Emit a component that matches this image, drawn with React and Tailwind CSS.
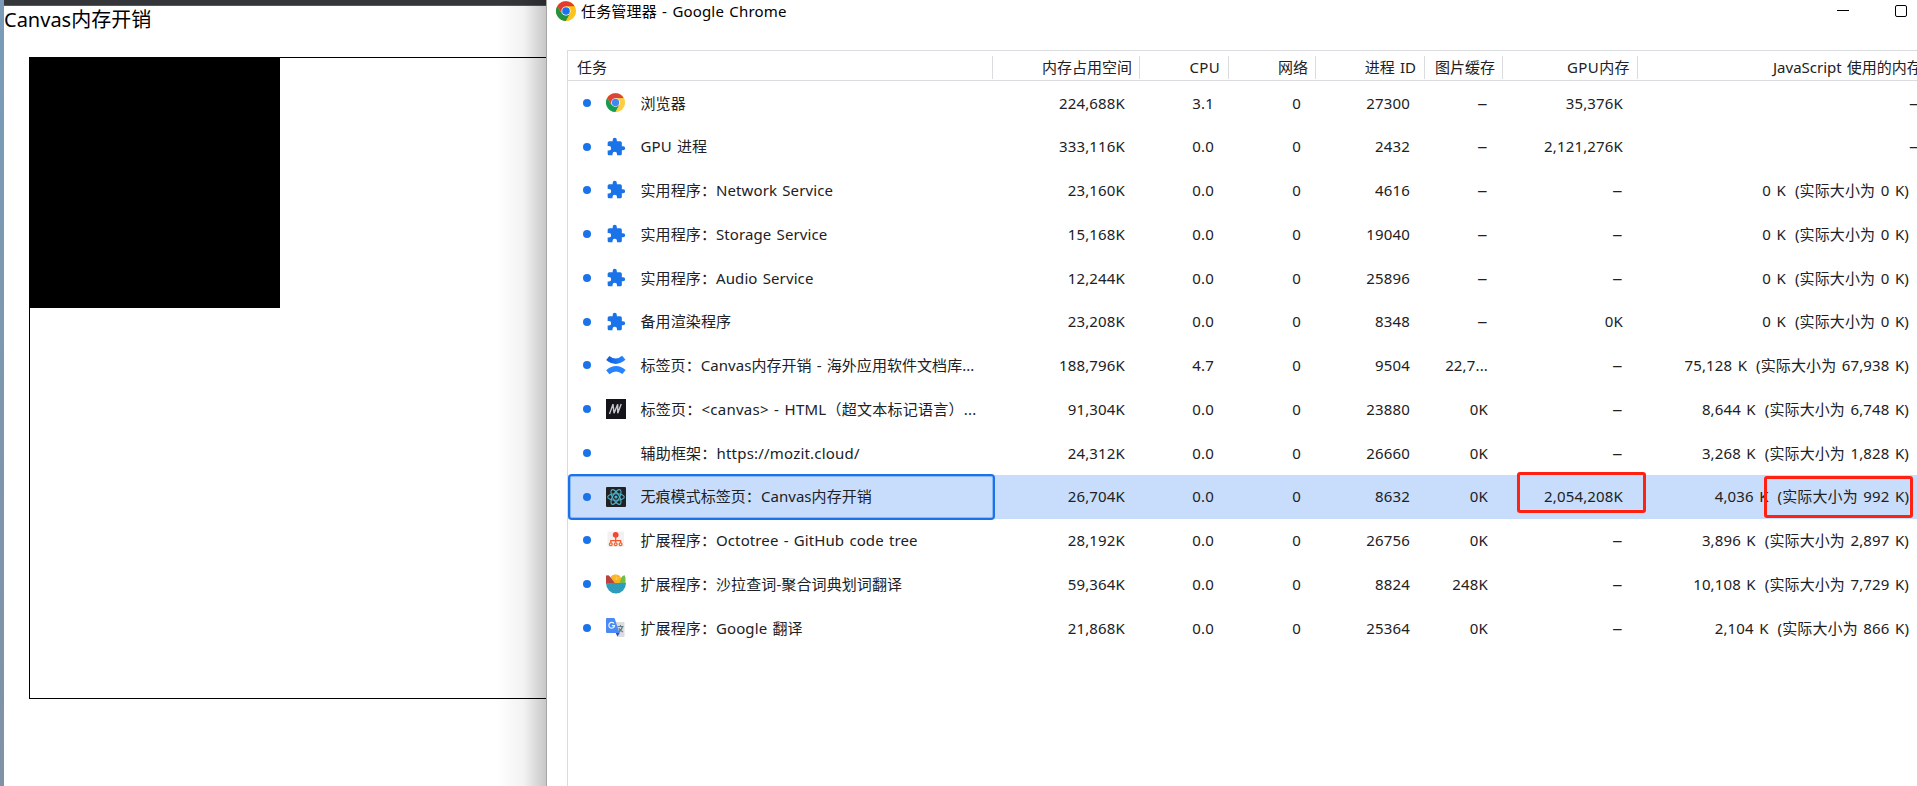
const PUZZLE =
  "M20.5 11H19V7c0-1.1-.9-2-2-2h-4V3.5a2.5 2.5 0 0 0-5 0V5H4c-1.1 0-2 .9-2 2v3.800h1.500a2.700 2.700 0 0 1 0 5.400H2V20c0 1.100.9 2 2 2h3.800v-1.500a2.700 2.700 0 0 1 5.400 0V22H17c1.100 0 2-.9 2-2v-4h1.500a2.500 2.500 0 0 0 0-5z";

function ChromeLogo({ soft }) {
  const red = soft ? "#db4437" : "#e33b2e";
  const green = soft ? "#0f9d58" : "#229342";
  const yellow = soft ? "#ffcd40" : "#fcc419";
  return (
    <svg viewBox="0 0 48 48" className="block h-full w-full">
      <circle cx="24" cy="24" r="24" fill={yellow} />
      <path d="M24 24 34.400 30 24 48A24 24 0 0 1 3.200 12L13.600 30Z" fill={green} />
      <path d="M24 13H44.800A24 24 0 0 0 3.200 12L14 30 24 24Z" fill={red} />
      <path d="M24 13H44.800A24 24 0 0 1 24 48L34 29Z" fill={yellow} />
      <circle cx="24" cy="24" r="11" fill="#fff" />
      <circle cx="24" cy="24" r="9.200" fill={soft ? "#4285f4" : "#1a73e8"} />
    </svg>
  );
}

function PuzzleIcon() {
  return (
    <svg viewBox="0 0 24 24" className="block h-[20px] w-[20px]">
      <path d={PUZZLE} fill="#1a73e8" />
    </svg>
  );
}

function ConfluenceIcon() {
  return (
    <svg viewBox="0 0 20 20" className="block h-[20px] w-[20px]">
      <defs>
        <linearGradient id="cfa" x1="0" x2="1">
          <stop offset="0" stopColor="#0f5fdc" />
          <stop offset="1" stopColor="#2684ff" />
        </linearGradient>
      </defs>
      <path d="M1.800 3Q10 9.500 17.800 2.800" fill="none" stroke="url(#cfa)" strokeWidth="5.200" />
      <path d="M1.800 17.200Q10 10.500 18 17" fill="none" stroke="#2684ff" strokeWidth="5.200" />
    </svg>
  );
}

function MdnIcon() {
  return (
    <svg viewBox="0 0 20 20" className="block h-[20px] w-[20px]">
      <rect width="20" height="20" fill="#15141a" />
      <path d="M3.500 15 7 5.200 8 14.200 11.700 5.200V14.200M11.700 14.200 15.200 5" fill="none" stroke="#c4c4c6" strokeWidth="1.400" />
    </svg>
  );
}

function ReactIcon() {
  return (
    <svg viewBox="0 0 20 20" className="block h-[20px] w-[20px]">
      <rect width="20" height="20" rx="1" fill="#222" />
      <g fill="none" stroke="#4fb3cd" strokeWidth="1.100">
        <ellipse cx="10" cy="10" rx="8.300" ry="3.300" />
        <ellipse cx="10" cy="10" rx="8.300" ry="3.300" transform="rotate(60 10 10)" />
        <ellipse cx="10" cy="10" rx="8.300" ry="3.300" transform="rotate(120 10 10)" />
      </g>
      <circle cx="10" cy="10" r="1.600" fill="#4fb3cd" />
    </svg>
  );
}

function OctotreeIcon() {
  return (
    <svg viewBox="0 0 20 20" className="block h-[20px] w-[20px]">
      <rect x="1.500" y="1.500" width="16.500" height="15.500" rx="1" fill="#f1f1f1" />
      <circle cx="9.700" cy="4.800" r="2.900" fill="#f4452d" />
      <path d="M9.700 6.500V12.500M4.800 13V10.600H14.600V13" fill="none" stroke="#f4572d" strokeWidth="1.300" />
      <g fill="#fff" stroke="#f4632d" strokeWidth="1.300">
        <circle cx="4.800" cy="14.200" r="1.400" />
        <circle cx="9.700" cy="14.200" r="1.400" />
        <circle cx="14.600" cy="14.200" r="1.400" />
      </g>
    </svg>
  );
}

function SaladIcon() {
  return (
    <svg viewBox="0 0 20 20" className="block h-[20px] w-[20px]">
      <path d="M0 1.500 2.500 1.200 9 7.500V10H0Z" fill="#b8433f" />
      <path d="M13 8 16 2.500 18.500 1 19.500 4V10H12Z" fill="#6bbf4b" />
      <path d="M4.500 3.500A5.400 4.500 0 0 1 15 4.500Q14.800 8.500 12.500 10H9.500Z" fill="#f9b21d" />
      <path d="M10.500 6 7 2.500M10.500 6 10 .5M10.500 6 13.800 2.500" stroke="#fdd568" strokeWidth=".7" />
      <path d="M0 9H20A10 10.500 0 0 1 0 9Z" fill="#2e9cba" />
    </svg>
  );
}

function TranslateIcon() {
  return (
    <svg viewBox="0 0 20 20" className="block h-[20px] w-[20px]">
      <path d="M8 4H17.500Q18.500 4 18.500 5V18Q18.500 19 17.500 19H11Z" fill="#dcdcdc" />
      <path d="M11.500 8.500H17.500M14.500 7V8.500M16.500 8.500Q15.500 12.500 12 14M12.800 10Q14.500 13 17 14" fill="none" stroke="#607d8b" strokeWidth="1.100" />
      <path d="M9.500 14.500H14L11.500 18.500Z" fill="#3749ab" />
      <path d="M1 0H8.500L13.500 15H1Q0 15 0 14V1Q0 0 1 0Z" fill="#4a8af4" />
      <path d="M8 5.500A2.900 2.900 0 1 0 8.600 7.700H5.900" fill="none" stroke="#eef3fd" strokeWidth="1.200" />
    </svg>
  );
}

const ICONS = {
  chrome: () => (
    <div className="h-[19px] w-[19px]">
      <ChromeLogo soft />
    </div>
  ),
  puzzle: PuzzleIcon,
  confluence: ConfluenceIcon,
  mdn: MdnIcon,
  react: ReactIcon,
  octotree: OctotreeIcon,
  salad: SaladIcon,
  translate: TranslateIcon,
};

const ROWS = [
  { icon: "chrome", name: "浏览器", mem: "224,688K", cpu: "3.1", pid: "27300", cache: "–", gpu: "35,376K", js: "–" },
  { icon: "puzzle", name: "GPU 进程", mem: "333,116K", cpu: "0.0", pid: "2432", cache: "–", gpu: "2,121,276K", js: "–" },
  { icon: "puzzle", name: "实用程序：Network Service", mem: "23,160K", cpu: "0.0", pid: "4616", cache: "–", gpu: "–", js: ["0 K", "(实际大小为 0 K)"] },
  { icon: "puzzle", name: "实用程序：Storage Service", mem: "15,168K", cpu: "0.0", pid: "19040", cache: "–", gpu: "–", js: ["0 K", "(实际大小为 0 K)"] },
  { icon: "puzzle", name: "实用程序：Audio Service", mem: "12,244K", cpu: "0.0", pid: "25896", cache: "–", gpu: "–", js: ["0 K", "(实际大小为 0 K)"] },
  { icon: "puzzle", name: "备用渲染程序", mem: "23,208K", cpu: "0.0", pid: "8348", cache: "–", gpu: "0K", js: ["0 K", "(实际大小为 0 K)"] },
  { icon: "confluence", name: "标签页：Canvas内存开销 - 海外应用软件文档库...", tracking: "tracking-[0.05px]", mem: "188,796K", cpu: "4.7", pid: "9504", cache: "22,7...", gpu: "–", js: ["75,128 K", "(实际大小为 67,938 K)"] },
  { icon: "mdn", name: "标签页：<canvas> - HTML（超文本标记语言）...", tracking: "tracking-[0.25px]", mem: "91,304K", cpu: "0.0", pid: "23880", cache: "0K", gpu: "–", js: ["8,644 K", "(实际大小为 6,748 K)"] },
  { icon: null, name: "辅助框架：https://mozit.cloud/", tracking: "tracking-[0.2px]", mem: "24,312K", cpu: "0.0", pid: "26660", cache: "0K", gpu: "–", js: ["3,268 K", "(实际大小为 1,828 K)"] },
  { icon: "react", name: "无痕模式标签页：Canvas内存开销", tracking: "tracking-[0.05px]", mem: "26,704K", cpu: "0.0", pid: "8632", cache: "0K", gpu: "2,054,208K", js: ["4,036 K", "(实际大小为 992 K)"], selected: true },
  { icon: "octotree", name: "扩展程序：Octotree - GitHub code tree", mem: "28,192K", cpu: "0.0", pid: "26756", cache: "0K", gpu: "–", js: ["3,896 K", "(实际大小为 2,897 K)"] },
  { icon: "salad", name: "扩展程序：沙拉查词-聚合词典划词翻译", mem: "59,364K", cpu: "0.0", pid: "8824", cache: "248K", gpu: "–", js: ["10,108 K", "(实际大小为 7,729 K)"] },
  { icon: "translate", name: "扩展程序：Google 翻译", mem: "21,868K", cpu: "0.0", pid: "25364", cache: "0K", gpu: "–", js: ["2,104 K", "(实际大小为 866 K)"] },
];

const GRID = "grid grid-cols-[425px_147px_89px_87px_109px_78px_135px_300px]";
const CELL = "flex items-center justify-end pr-[15px] tracking-[0.15px]";

function HeadCell({ children }) {
  return (
    <div className="my-[5px] flex items-center justify-end border-r border-[#dadce0] pr-[7px]">
      {children}
    </div>
  );
}

function Value({ text }) {
  return text === "–" ? <span className="inline-block origin-right scale-x-[1.35]">–</span> : text;
}

function Row({ row }) {
  const Icon = row.icon ? ICONS[row.icon] : null;
  return (
    <div className={`${GRID} h-[43.75px] ${row.selected ? "bg-[#c8ddfb]" : ""}`}>
      <div className="relative flex items-center pl-[15px]">
        {row.selected && (
          <div className="absolute -top-px bottom-[-1px] left-0 w-[427px] rounded-[4px] border-2 border-[#1a73e8] inset-shadow-[0_0_0_1px_#8ab8f6]" />
        )}
        <div className="size-[8px] rounded-full bg-[#1a73e8]" />
        <div className="ml-[15px] flex h-[20px] w-[34.5px] items-start">{Icon && <Icon />}</div>
        <div className={`whitespace-pre ${row.tracking || "tracking-[0.1px]"}`}>{row.name}</div>
      </div>
      <div className={CELL}>{row.mem}</div>
      <div className={CELL}>{row.cpu}</div>
      <div className={CELL}>0</div>
      <div className={CELL}>{row.pid}</div>
      <div className={CELL}>
        <Value text={row.cache} />
      </div>
      <div className={`${CELL} relative`}>
        <Value text={row.gpu} />
        {row.selected && (
          <div className="absolute -top-[3px] left-[14px] h-[41px] w-[129px] rounded-[3px] border-3 border-[#ff2213]" />
        )}
      </div>
      {row.js === "–" ? (
        <div className="flex items-center pl-[271px]">
          <span className="inline-block origin-left scale-x-[1.35]">–</span>
        </div>
      ) : (
        <div className="relative flex items-center justify-end gap-[9px] pr-[29px] tracking-[0.12px] whitespace-nowrap [word-spacing:1.5px]">
          <span>{row.js[0]}</span>
          <span>{row.js[1]}</span>
          {row.selected && (
            <div className="absolute top-[1px] left-[126px] h-[42px] w-[149px] rounded-[3px] border-3 border-[#ff2213]" />
          )}
        </div>
      )}
    </div>
  );
}

export default function App() {
  return (
    <div className="flex h-[786px] w-[1917px] overflow-hidden bg-white font-['Noto_Sans','Noto_Sans_CJK_SC',sans-serif] [word-spacing:1.2px]">
      <div className="w-[4px] shrink-0 bg-linear-to-b from-[#7a9cb8] to-[#8092a6]" />
      <div className="relative flex w-[542px] shrink-0 flex-col overflow-hidden">
        <div className="h-[6px] shrink-0 border-b border-[#5b565c] bg-[#35363a]" />
        <div className="h-[51px] shrink-0 text-[20px] leading-[28px] text-black">Canvas内存开销</div>
        <div className="ml-[25px] h-[642px] w-[700px] shrink-0 border border-black">
          <div className="size-[250px] bg-black" />
        </div>
        <div className="absolute inset-y-0 right-0 w-[50px] bg-linear-to-r from-transparent via-black/5 via-55% to-black/22" />
      </div>
      <div className="flex w-[1371px] shrink-0 flex-col overflow-hidden border-l border-[#a5a5a5] bg-white">
        <div className="flex h-[50px] shrink-0 items-start text-black">
          <div className="mt-[1px] ml-[9px] size-[20px]">
            <ChromeLogo />
          </div>
          <div className="ml-[5px] text-[15px] leading-[23px] tracking-[0.17px]">任务管理器 - Google Chrome</div>
          <div className="mt-[10px] mr-[10px] ml-auto flex gap-[46px]">
            <div className="h-px w-[12px] bg-black" />
            <div className="-mt-[5px] size-[12px] rounded-[2px] border border-black" />
          </div>
        </div>
        <div className="ml-[20px] flex h-[736px] w-[1400px] flex-col border-t border-l border-[#dadce0] text-[15px] text-[#202124]">
          <div className={`${GRID} h-[30px] shrink-0 border-b border-[#dadce0]`}>
            <div className="my-[5px] flex items-center border-r border-[#dadce0] pl-[9px]">任务</div>
            <HeadCell>内存占用空间</HeadCell>
            <HeadCell>
              <span className="mr-px tracking-[0.3px]">CPU</span>
            </HeadCell>
            <HeadCell>网络</HeadCell>
            <HeadCell>
              <span className="mr-px">进程 ID</span>
            </HeadCell>
            <HeadCell>图片缓存</HeadCell>
            <HeadCell>
              <span className="tracking-[0.4px]">GPU内存</span>
            </HeadCell>
            <div className="flex items-center pl-[135px] whitespace-nowrap">JavaScript 使用的内存</div>
          </div>
          {ROWS.map((row, i) => (
            <Row key={i} row={row} />
          ))}
        </div>
      </div>
    </div>
  );
}
